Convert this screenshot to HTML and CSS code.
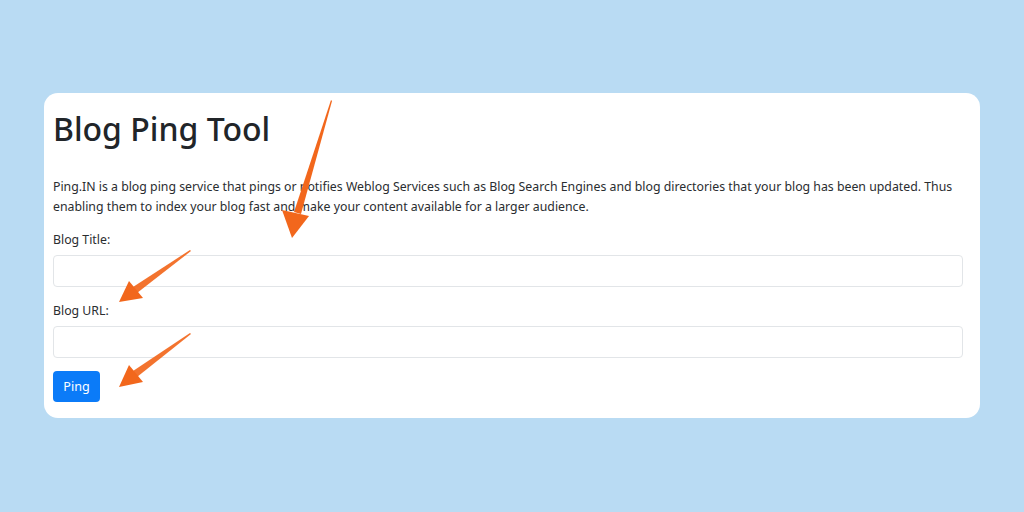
FILE: index.html
```html
<!DOCTYPE html>
<html lang="en">
<head>
<meta charset="utf-8">
<title>Blog Ping Tool</title>
<link rel="stylesheet" href="styles.css">
</head>
<body>
<main class="card">
  <h1 class="title">Blog Ping Tool</h1>
  <p class="intro">Ping.IN is a blog ping service that pings or notifies Weblog Services such as Blog Search Engines and blog directories that your blog has been updated. Thus enabling them to index your blog fast and make your content available for a larger audience.</p>
  <form class="form">
    <label class="label" for="title">Blog Title:</label>
    <input class="field" id="title" type="text">
    <label class="label" for="url">Blog URL:</label>
    <input class="field" id="url" type="text">
    <button class="btn" type="button">Ping</button>
  </form>
</main>
<svg class="arrows" width="1024" height="512" viewBox="0 0 1024 512">
  <g fill="#f2671c">
    <polygon points="331,100 332,101 301,214 294,212"/>
    <polygon points="292,238 282,210 309,216"/>
    <polygon points="190,250 191,251 137,293 133,287" opacity="0.92"/>
    <polygon points="119,302 129,281 143,298"/>
    <polygon points="190,333 191,334 137,377 133,371" opacity="0.92"/>
    <polygon points="119,387 129,365 143,382"/>
  </g>
</svg>
</body>
</html>
```

FILE: styles.css
```css
html, body {
  margin: 0;
  padding: 0;
}
body {
  width: 1024px;
  height: 512px;
  background: #b9dbf3;
  font-family: "Noto Sans", "Open Sans", sans-serif;
  color: #212529;
  position: relative;
  overflow: hidden;
  padding-top: 93px;
  box-sizing: border-box;
}
.card {
  margin-left: 44px;
  width: 936px;
  height: 325px;
  box-sizing: border-box;
  background: #fff;
  border-radius: 14px;
  padding: 17px 17px 17px 9px;
}
.title {
  margin: 0;
  font-size: 32px;
  line-height: 38px;
  font-weight: 500;
  letter-spacing: 0;
}
.intro {
  margin: 29px 0 13px;
  font-size: 12.3px;
  line-height: 20px;
  color: #2a2d30;
}
.form {
  display: flex;
  flex-direction: column;
  align-items: flex-start;
}
.label {
  font-size: 12.3px;
  line-height: 20px;
  margin-bottom: 5px;
  color: #2a2d30;
}
.field {
  width: 100%;
  height: 32px;
  box-sizing: border-box;
  border: 1px solid #e2e5e8;
  border-radius: 4px;
  margin: 0 0 14px;
  background: #fff;
}
.form .field:last-of-type {
  margin-bottom: 13px;
}
.btn {
  width: 47px;
  height: 31px;
  border: none;
  border-radius: 4px;
  background: #0b7bf8;
  color: #fff;
  font-family: "Noto Sans", "Open Sans", sans-serif;
  font-size: 12.6px;
  padding: 0;
}
.arrows {
  position: absolute;
  left: 0;
  top: 0;
  pointer-events: none;
}
```
